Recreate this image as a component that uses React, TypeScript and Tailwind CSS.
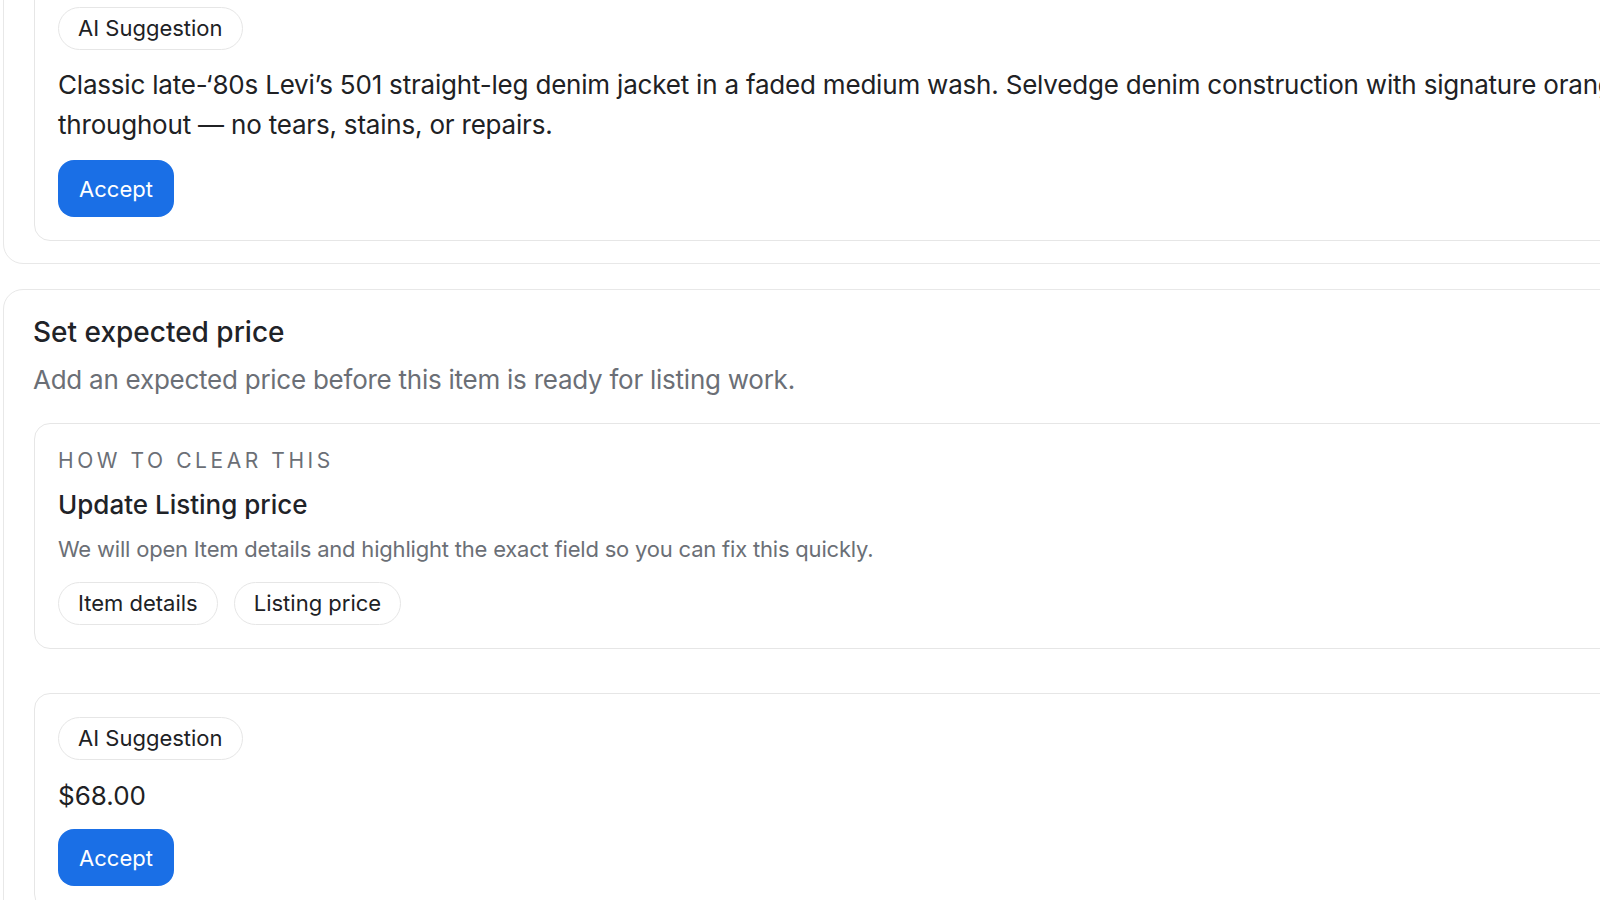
import React from 'react';

const font = { fontFamily: 'Inter, "Noto Sans", sans-serif' };

const Pill = ({ label }: { label: string }) => (
  <span className="inline-flex items-center h-[43px] px-[19px] rounded-full border border-[#e6e6e6] bg-white text-[22px] text-[#202124] whitespace-nowrap">
    {label}
  </span>
);

const AcceptButton = () => (
  <button className="w-[116px] h-[57px] rounded-[16px] bg-[#1a6fe6] text-white text-[22px] leading-none">
    Accept
  </button>
);

const App = () => {
  return (
    <div className="w-[1600px] h-[900px] overflow-hidden bg-white text-[#202124]" style={font}>
      <div className="flex flex-col gap-[25px] pl-[3px] -mt-[48px]">
        {/* Description card (scrolled past) */}
        <section className="w-[1700px] rounded-[20px] border border-[#e8e8e8] bg-white pl-[30px] pt-[30px] pb-[22px]">
          <div className="rounded-[16px] border border-[#e6e6e6] bg-white p-[23px] flex flex-col items-start">
            <Pill label="AI Suggestion" />
            <p className="mt-[15px] text-[26px] leading-[40px] whitespace-nowrap tracking-[-0.2px]">
              Classic late-‘80s Levi’s 501 straight-leg denim jacket in a faded medium wash. Selvedge denim construction with signature orange tab and copper rivets. Excellent condition
              <br />
              throughout — no tears, stains, or repairs.
            </p>
            <div className="mt-[15px]">
              <AcceptButton />
            </div>
          </div>
        </section>

        {/* Expected price card */}
        <section className="w-[1700px] rounded-[20px] border border-[#e8e8e8] bg-white pl-[29px] pt-[24px] pb-[24px]">
          <h2 className="text-[28px] leading-[36px] font-medium text-[#1f2328]">Set expected price</h2>
          <p className="mt-[12px] text-[26px] leading-[36px] tracking-[-0.25px] text-[#6b6f76]">
            Add an expected price before this item is ready for listing work.
          </p>

          <div className="mt-[25px] ml-[1px] rounded-[16px] border border-[#e6e6e6] bg-white px-[23px] pt-[22px] pb-[23px] flex flex-col items-start">
            <div className="mt-[1px] text-[21px] leading-[28px] tracking-[0.17em] uppercase text-[#6b6f76]">How to clear this</div>
            <h3 className="mt-[13px] text-[26px] leading-[34px] font-medium text-[#1f2328]">Update Listing price</h3>
            <p className="mt-[11px] text-[22px] leading-[32px] tracking-[-0.2px] text-[#6b6f76]">
              We will open Item details and highlight the exact field so you can fix this quickly.
            </p>
            <div className="mt-[17px] flex gap-[16px]">
              <Pill label="Item details" />
              <Pill label="Listing price" />
            </div>
          </div>

          <div className="mt-[44px] ml-[1px] rounded-[16px] border border-[#e6e6e6] bg-white p-[23px] flex flex-col items-start">
            <Pill label="AI Suggestion" />
            <div className="mt-[18px] text-[26px] leading-[36px]">$68.00</div>
            <div className="mt-[15px]">
              <AcceptButton />
            </div>
          </div>
        </section>
      </div>
    </div>
  );
};

export default App;
